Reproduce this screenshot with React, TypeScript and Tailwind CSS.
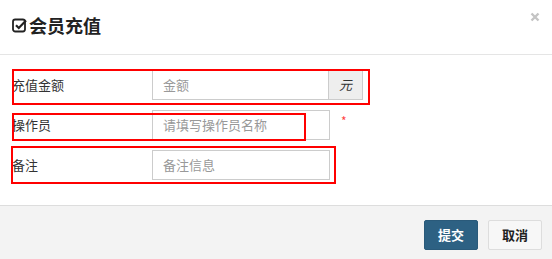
import React from "react";

const font = { fontFamily: '"Noto Sans CJK SC", "Liberation Sans", sans-serif' };

function CheckSquare() {
  return (
    <svg width="16" height="15" viewBox="0 0 16 15" className="mr-[1px]">
      <rect x="1" y="1.5" width="12" height="12" rx="2.2" fill="none" stroke="#222" strokeWidth="1.8" />
      <path d="M4 7.2 L6.8 10 L14 2.6" fill="none" stroke="#222" strokeWidth="2.2" />
    </svg>
  );
}

function CloseX() {
  return (
    <svg width="10" height="10" viewBox="0 0 10 10">
      <path d="M1.5 1.5 L8.5 8.5 M8.5 1.5 L1.5 8.5" stroke="#c4c4c4" strokeWidth="2.4" />
    </svg>
  );
}

export default function App() {
  return (
    <div className="relative w-[552px] h-[259px] bg-white text-[#333] overflow-hidden" style={font}>
      <div className="h-[55px] border-b border-[#e5e5e5] flex items-start justify-between pl-[12px] pr-[12px]">
        <div className="flex items-center text-[18px] font-bold text-[#222] leading-none mt-[16px]">
          <CheckSquare />
          <span>会员充值</span>
        </div>
        <div className="mt-[12px]">
          <CloseX />
        </div>
      </div>
      <div className="pt-[15px] pb-[25px] pl-[12px] flex flex-col gap-[10px] text-[13px]">
        <div className="flex items-center h-[30px]">
          <div className="w-[140px]">充值金额</div>
          <div className="flex h-[30px]">
            <div className="w-[177px] border border-[#ccc] flex items-center pl-[10px] text-[#999]">金额</div>
            <div className="w-[34px] border border-l-0 border-[#ccc] bg-[#eee] flex items-center justify-center italic text-[#333]">元</div>
          </div>
        </div>
        <div className="flex items-center h-[30px]">
          <div className="w-[140px]">操作员</div>
          <div className="w-[178px] h-[30px] border border-[#ccc] flex items-center pl-[10px] text-[#999]">请填写操作员名称</div>
          <span className="ml-[11px] text-[#f44] text-[12px] -mt-[8px]">*</span>
        </div>
        <div className="flex items-center h-[30px]">
          <div className="w-[140px]">备注</div>
          <div className="w-[178px] h-[30px] border border-[#ccc] flex items-center pl-[10px] text-[#999]">备注信息</div>
        </div>
      </div>
      <div className="absolute left-0 right-0 bottom-0 top-[205px] bg-[#f3f3f3] border-t border-[#ddd] flex items-start justify-end pt-[14px] pr-[10px] gap-[10px] text-[13px]">
        <button className="w-[54px] h-[30px] bg-[#2d6183] border border-[#2a5a7a] rounded-[2px] text-white font-bold">提交</button>
        <button className="w-[54px] h-[30px] bg-[#f7f7f7] border border-[#ddd] rounded-[2px] text-[#222] font-bold">取消</button>
      </div>
      <div className="absolute left-[12px] top-[69px] w-[358px] h-[36px] shadow-[inset_0_0_0_2px_#ff0000]" />
      <div className="absolute left-[12px] top-[113px] w-[294px] h-[28px] shadow-[inset_0_0_0_2px_#ff0000]" />
      <div className="absolute left-[11px] top-[146px] w-[325px] h-[38px] shadow-[inset_0_0_0_2px_#ff0000]" />
    </div>
  );
}
